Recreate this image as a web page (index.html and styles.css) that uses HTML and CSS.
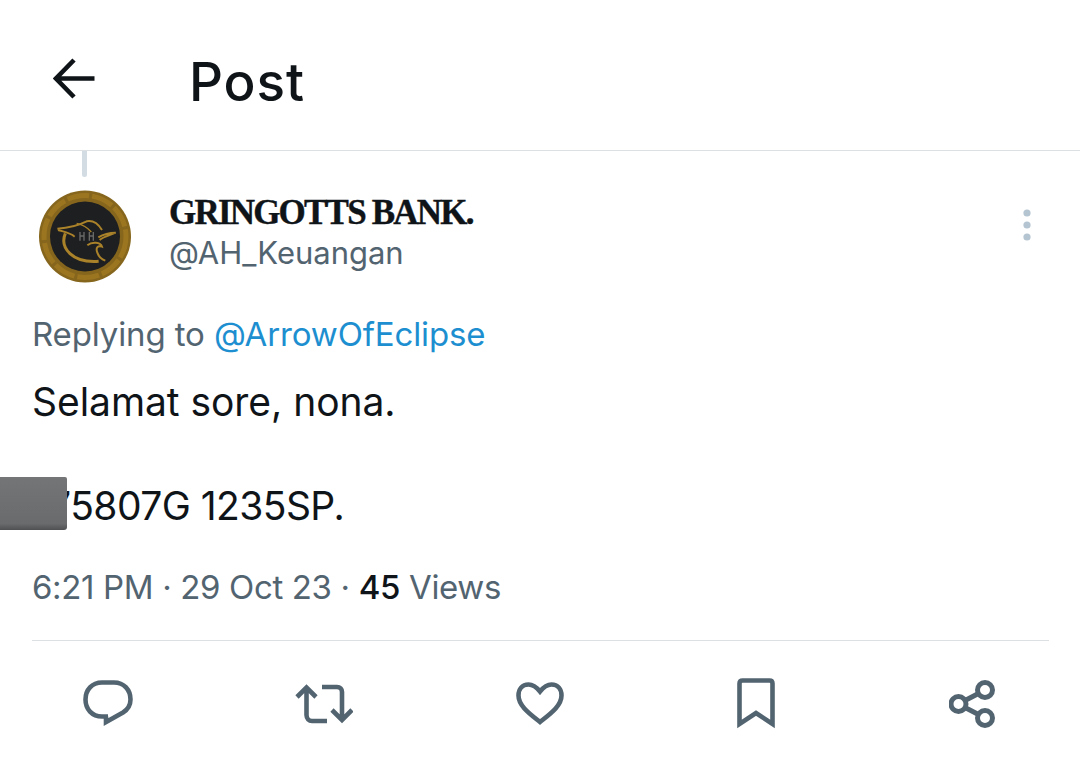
FILE: index.html
```html
<!DOCTYPE html>
<html lang="en">
<head>
<meta charset="utf-8">
<title>Post</title>
<link rel="stylesheet" href="styles.css">
</head>
<body>
<header class="topbar">
  <svg class="back" width="42" height="41" viewBox="0 0 42 41"><path d="M41.500 20.500H4M21 2 3 20.500 21 39" fill="none" stroke="#0f1419" stroke-width="4.600"/></svg>
  <h1 class="title">Post</h1>
</header>
<main class="post">
  <div class="thread"></div>
  <div class="author">
    <svg class="avatar" width="96" height="96" viewBox="0 0 96 96">
      <circle cx="48" cy="47.500" r="46" fill="#86661d"/>
      <circle cx="48" cy="47.500" r="41" fill="none" stroke="#9c7520" stroke-width="5" stroke-dasharray="22 3"/>
      <circle cx="48" cy="47.500" r="35" fill="#1e1f21"/>
      <g transform="translate(-7 -9) scale(.3333)" fill="none" stroke="#a98229" stroke-width="6">
        <path d="M82 146c30-2 60-8 88-22 20-4 36 10 46 26"/>
        <path d="M84 150c20 6 36 8 50 20M205 172c16-10 32-14 52-14-16 8-34 10-48 22"/>
        <path d="M106 160c-18 44 22 90 100 84" stroke-width="9"/>
        <path d="M172 196c14-12 40-10 44 4-12-4-20 2-14 18 4 12 12 20 24 24"/>
        <path d="M140 130c20 4 34 14 44 26" stroke-width="4"/>
        <path d="M150 156v26M162 156v26M150 168h12M178 156v26M190 156v26M178 168h12" stroke="#6a6a68" stroke-width="4"/>
      </g>
    </svg>
    <div class="names">
      <div class="name">GRINGOTTS BANK.</div>
      <div class="handle">@AH_Keuangan</div>
    </div>
    <svg class="more" width="10" height="34" viewBox="0 0 10 34"><circle cx="5" cy="5" r="3.600"/><circle cx="5" cy="17" r="3.600"/><circle cx="5" cy="29" r="3.600"/></svg>
  </div>
  <p class="reply">Replying to <span class="mention">@ArrowOfEclipse</span></p>
  <p class="body">Selamat sore, nona.</p>
  <p class="body amount">75807G 1235SP.</p>
  <div class="redact"></div>
  <p class="meta">6:21 PM · 29 Oct 23 · <b class="count">45</b> Views</p>
  <div class="divider"></div>
  <div class="actions">
    <svg width="50" height="48" viewBox="0 0 50 48"><path d="M25 36.500H19C9 36.500 2.500 29 2.500 19.500 2.500 10 9 2.500 19 2.500H31C41 2.500 47.500 10 47.500 19.500 47.500 26 44 30 40 32.500L23 42V36.500Z" fill="none" stroke="#536471" stroke-width="4.600" stroke-miterlimit="10"/></svg>
    <svg width="58" height="40" viewBox="0 0 58 40"><g fill="none" stroke="#536471" stroke-width="4.600"><path d="M2 13 11.500 3.500 21 13M11.500 5V31C11.500 34.500 14 37 17 37H32"/><path d="M27 3H42C45 3 47 5 47 8V36M37 26 47 36 57 26"/></g></svg>
    <svg width="48" height="43" viewBox="0 0 48 43"><path d="M24 9.500C20 4.500 16 2.500 12.500 2.500 6 2.500 2.500 7.500 2.500 13.500 2.500 24 14 32 24 40 34 32 45.500 24 45.500 13.500 45.500 7.500 42 2.500 35.500 2.500 32 2.500 28 4.500 24 9.500Z" fill="none" stroke="#536471" stroke-width="4.600"/></svg>
    <svg width="38" height="51" viewBox="0 0 38 51"><path d="M2.500 46V5.500C2.500 3.500 3.500 2.500 5.500 2.500H32.500C34.500 2.500 35.500 3.500 35.500 5.500V46L19 35Z" fill="none" stroke="#536471" stroke-width="4.600"/></svg>
    <svg width="46" height="48" viewBox="0 0 46 48"><g fill="none" stroke="#536471" stroke-width="5"><circle cx="9.500" cy="24" r="7.500"/><circle cx="36" cy="10" r="7.500"/><circle cx="36" cy="38" r="7.500"/><path d="M16 20.500 29.500 13.500M16 27.500 29.500 34.500"/></g></svg>
  </div>
</main>
</body>
</html>
```
FILE: styles.css
```css
* { box-sizing: border-box; }
html, body { margin: 0; height: 100%; overflow: hidden; background: #fff; }
body { font-family: Inter, "Liberation Sans", sans-serif; color: #0f1419; }
p, h1 { margin: 0; }
.topbar { height: 151px; border-bottom: 1px solid #dce0e3; display: flex; align-items: center; padding: 14px 0 0 53px; }
.back { margin-top: -8px; }
.title { font-size: 53px; font-weight: 500; line-height: 60px; margin-left: 94px; letter-spacing: 0.9px; }
.post { position: relative; padding: 0 31px 0 32px; }
.thread { width: 5px; height: 26px; margin-left: 50px; background: #d3dce3; border-radius: 0 0 3px 3px; }
.author { display: flex; align-items: center; margin-top: 12px; height: 96px; }
.avatar { margin-left: 5px; flex: none; filter: blur(.5px); }
.names { margin: -10px 0 0 36px; flex: 1; padding-top: 2px; }
.name { font-family: "Liberation Serif", serif; font-weight: 700; font-size: 35px; line-height: 40px; letter-spacing: -1.8px; -webkit-text-stroke: 0.4px #0f1419; }
.handle { font-size: 31px; line-height: 40px; color: #536471; letter-spacing: -0.03px; }
.more { fill: #b4c4d0; margin: -24px 17px 0 0; }
.reply { font-size: 33px; line-height: 44px; color: #536471; margin-top: 27px; letter-spacing: -0.13px; }
.mention { color: #1d8fd0; }
.body { font-size: 39px; line-height: 52px; margin-top: 20px; letter-spacing: -0.05px; }
.amount { margin-top: 52px; padding-left: 17px; letter-spacing: -0.55px; }
.redact { position: absolute; left: 0; top: 326px; width: 67px; height: 53px; background: linear-gradient(#747577, #6a6b6d 88%, #4f5052); border-radius: 0 2px 3px 0; }
.meta { font-size: 33px; line-height: 44px; color: #536471; margin-top: 33px; letter-spacing: -0.35px; }
.count { color: #0f1419; font-weight: 500; }
.divider { border-top: 1px solid #dce0e3; margin-top: 31px; }
.actions { margin: 0 0 0 -32px; padding-top: 36px; height: 89px; display: grid; grid-template-columns: repeat(5, 216px); justify-items: center; align-items: center; }
```
